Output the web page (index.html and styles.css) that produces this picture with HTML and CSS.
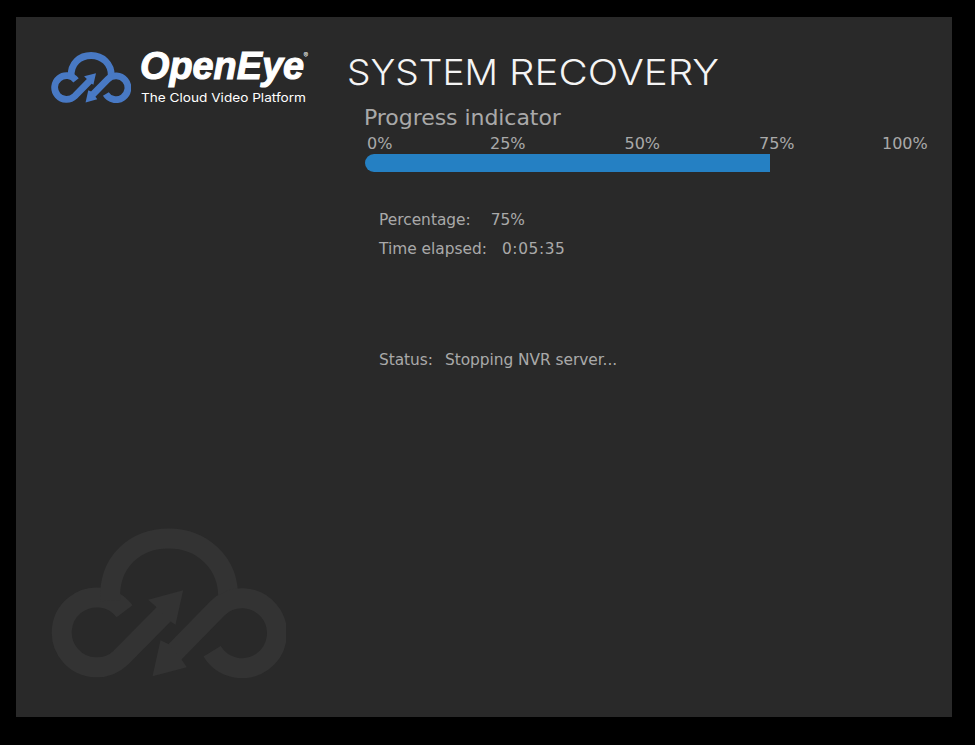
FILE: index.html
```html
<!DOCTYPE html>
<html lang="en">
<head>
<meta charset="utf-8">
<title>System Recovery</title>
<link rel="stylesheet" href="styles.css">
</head>
<body>
<svg class="defs" width="0" height="0" aria-hidden="true">
  <symbol id="cloud" viewBox="34 37 706 450">
    <g fill="none" stroke="currentColor" stroke-width="60">
      <path d="M255 287A105 105 0 1 0 244 426L380 288"/>
      <path d="M212 255C205 135 290 68 388 68S570 140 566 250"/>
      <path d="M518 407A105 105 0 1 0 534 278L400 415"/>
    </g>
    <path fill="currentColor" d="M431 224L326 252L348 272L390 315L408 327ZM339 482L363 374L388 386L425 430L442 455Z"/>
  </symbol>
</svg>
<main class="screen">
  <aside class="side">
    <div class="brand">
      <svg class="mark"><use href="#cloud"/></svg>
      <svg class="wordmark" viewBox="0 0 172 64">
        <text class="name" x="-1" y="34" textLength="164" lengthAdjust="spacingAndGlyphs">OpenEye</text>
        <text class="reg" x="162.500" y="13">®</text>
        <text class="tagline" x="0" y="57" textLength="165" lengthAdjust="spacingAndGlyphs">The Cloud Video Platform</text>
      </svg>
    </div>
    <svg class="watermark"><use href="#cloud"/></svg>
  </aside>
  <section class="content">
    <svg class="title" viewBox="0 0 380 44">
      <text x="-1" y="36" textLength="151" lengthAdjust="spacingAndGlyphs">SYSTEM</text>
      <text x="161" y="36" textLength="210" lengthAdjust="spacingAndGlyphs">RECOVERY</text>
    </svg>
    <h2>Progress indicator</h2>
    <div class="scale"><span>0%</span><span>25%</span><span>50%</span><span>75%</span><span>100%</span></div>
    <div class="track"><div class="fill"></div></div>
    <div class="row percent"><span>Percentage:</span><span>75%</span></div>
    <div class="row elapsed"><span>Time elapsed:</span><span class="time">0:05:35</span></div>
    <div class="row status"><span>Status:</span><span>Stopping NVR server...</span></div>
  </section>
</main>
</body>
</html>
```
FILE: styles.css
```css
* { box-sizing: border-box; }
body {
  margin: 0;
  padding: 17px 23px 28px 16px;
  height: 745px;
  background: #000;
  font-family: "DejaVu Sans", sans-serif;
  color: #a9a9a9;
}
svg { display: block; overflow: visible; }
.defs { position: absolute; }
.screen { display: flex; width: 936px; height: 700px; background: #292929; }
.side {
  display: flex;
  flex-direction: column;
  justify-content: space-between;
  width: 332px;
  padding: 32px 0 39px 35px;
}
.brand { display: flex; gap: 10px; }
.mark { width: 80px; height: 51px; margin-top: 3px; color: #4879c4; }
.wordmark { width: 172px; height: 64px; fill: #fff; margin-top: -4px; }
.name {
  font: italic 700 38px "Liberation Sans", sans-serif;
  stroke: #fff;
  stroke-width: 1.1px;
}
.reg { font: 7px Inter, sans-serif; }
.tagline { font: 400 12px Inter, sans-serif; }
.watermark { width: 235px; height: 150px; color: #333; }
.content { width: 604px; padding-top: 32px; }
.title { width: 380px; height: 44px; fill: #f4f4f4; font: 300 36px Inter, sans-serif; }
h2 { margin: 11px 0 0 16px; font-size: 22px; line-height: 28px; font-weight: 400; letter-spacing: -.05px; }
.scale {
  display: grid;
  grid-template-columns: 123px 134.500px 134.500px 123px 47px;
  height: 22px;
  padding-top: 1px;
  margin-left: 19px;
  font-size: 16px;
  line-height: 22px;
}
.track { width: 540px; height: 18px; margin: 0 0 0 17px; }
.fill { width: 75%; height: 100%; border-radius: 9px 0 0 9px; background: #2580c3; }
.row { display: flex; margin-left: 31px; font-size: 15.400px; line-height: 22px; }
.percent { gap: 20px; margin-top: 37px; }
.elapsed { gap: 15px; margin-top: 7px; }
.time { letter-spacing: .6px; }
.status { gap: 12px; margin-top: 89px; letter-spacing: -.04px; }
```
